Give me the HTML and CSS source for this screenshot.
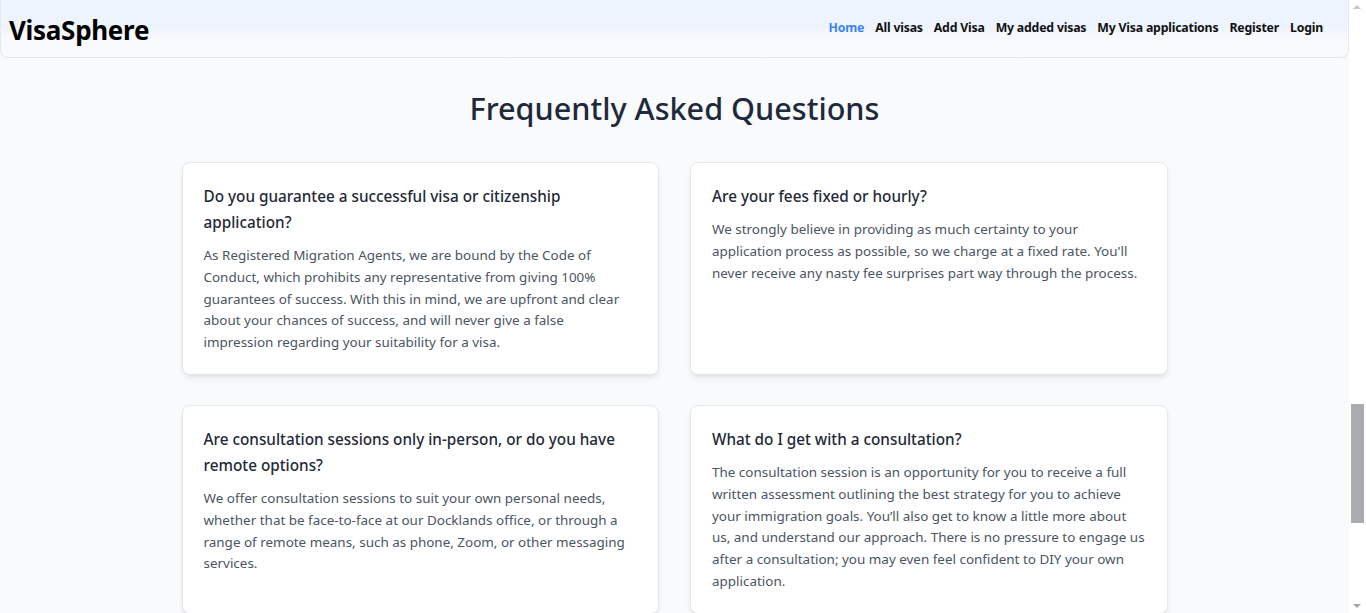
FILE: index.html
```html
<!DOCTYPE html>
<html lang="en">
<head>
<meta charset="utf-8">
<title>VisaSphere - FAQ</title>
<link rel="stylesheet" href="styles.css">
</head>
<body>
<div class="page">
  <header class="navbar">
    <a class="brand" href="#">VisaSphere</a>
    <nav class="links">
      <a class="link active" href="#">Home</a>
      <a class="link" href="#">All visas</a>
      <a class="link" href="#">Add Visa</a>
      <a class="link" href="#">My added visas</a>
      <a class="link" href="#">My Visa applications</a>
      <a class="link" href="#">Register</a>
      <a class="link" href="#">Login</a>
    </nav>
  </header>
  <main class="faq">
    <h2 class="faq-title">Frequently Asked Questions</h2>
    <div class="faq-grid">
      <article class="card">
        <h3 class="q">Do you guarantee a successful visa or citizenship application?</h3>
        <p class="a">As Registered Migration Agents, we are bound by the Code of Conduct, which prohibits any representative from giving 100% guarantees of success. With this in mind, we are upfront and clear about your chances of success, and will never give a false<br>impression regarding your suitability for a visa.</p>
      </article>
      <article class="card">
        <h3 class="q">Are your fees fixed or hourly?</h3>
        <p class="a">We strongly believe in providing as much certainty to your application process as possible, so we charge at a fixed rate. You'll never receive any nasty fee surprises part way through the process.</p>
      </article>
      <article class="card">
        <h3 class="q">Are consultation sessions only in-person, or do you have remote options?</h3>
        <p class="a">We offer consultation sessions to suit your own personal needs, whether that be face-to-face at our Docklands office, or through a range of remote means, such as phone, Zoom, or other messaging services.</p>
      </article>
      <article class="card">
        <h3 class="q">What do I get with a consultation?</h3>
        <p class="a">The consultation session is an opportunity for you to receive a full written assessment outlining the best strategy for you to achieve your immigration goals. You’ll also get to know a little more about us, and understand our approach. There is no pressure to engage us after a consultation; you may even feel confident to DIY your own application.</p>
      </article>
    </div>
  </main>
</div>
<div class="scrollbar" aria-hidden="true">
  <span class="arrow up"></span>
  <span class="thumb"></span>
  <span class="arrow down"></span>
</div>
</body>
</html>
```

FILE: styles.css
```css
* { box-sizing: border-box; }
html, body { margin: 0; padding: 0; }
body {
  background: #f8fafc;
  font-family: "Noto Sans", "Open Sans", sans-serif;
  color: #1f2937;
}
.page {
  margin-right: 17px;
}
.navbar {
  height: 58px;
  display: flex;
  align-items: center;
  justify-content: space-between;
  padding: 0 25px 0 8px;
  border: 1px solid #e5e7eb;
  border-top: none;
  border-radius: 0 0 8px 8px;
  background: linear-gradient(to bottom, #edf4fe 0%, #eef4fe 48%, #f7f9fc 62%, #f8fafc 100%);
}
.brand {
  font-size: 26px;
  font-weight: 700;
  color: #000;
  text-decoration: none;
  letter-spacing: -0.3px;
  margin-top: 3px;
}
.links {
  display: flex;
  gap: 11px;
  margin-top: -3px;
}
.link {
  font-size: 12.3px;
  font-weight: 700;
  color: #111;
  text-decoration: none;
  letter-spacing: -0.2px;
}
.link.active { color: #3b82f6; }
.faq {
  padding: 32px 0 120px;
}
.faq-title {
  margin: 0 0 36px;
  text-align: center;
  font-size: 30.6px;
  font-weight: 500;
  color: #1e293b;
  line-height: 36px;
}
.faq-grid {
  width: 986px;
  margin: 0 auto;
  display: grid;
  grid-template-columns: 1fr 1fr;
  column-gap: 31px;
  row-gap: 30px;
}
.card {
  background: #fff;
  border: 1px solid #e5e7eb;
  border-radius: 8px;
  padding: 20px 19.5px 20px 21px;
  box-shadow: 0 4px 6px -1px rgba(0,0,0,0.08), 0 2px 4px -2px rgba(0,0,0,0.06);
}
.q {
  margin: 0 0 10px;
  font-size: 15.3px;
  font-weight: 500;
  line-height: 26px;
  color: #1f2937;
}
.a {
  margin: 0;
  font-size: 13.45px;
  line-height: 21.8px;
  color: #4b5563;
}
.scrollbar {
  position: fixed;
  top: 0;
  right: 0;
  width: 17px;
  height: 100%;
  background: #ffffff;
}
.thumb {
  position: absolute;
  left: 2px;
  top: 404px;
  width: 13px;
  height: 119px;
  background: #a8abaf;
}
.arrow {
  position: absolute;
  left: 4px;
  width: 0;
  height: 0;
  border-left: 4.5px solid transparent;
  border-right: 4.5px solid transparent;
}
.arrow.up {
  top: 5px;
  border-bottom: 4px solid #c4c6c9;
}
.arrow.down {
  bottom: 5px;
  border-top: 4px solid #a3a5a8;
}
```
